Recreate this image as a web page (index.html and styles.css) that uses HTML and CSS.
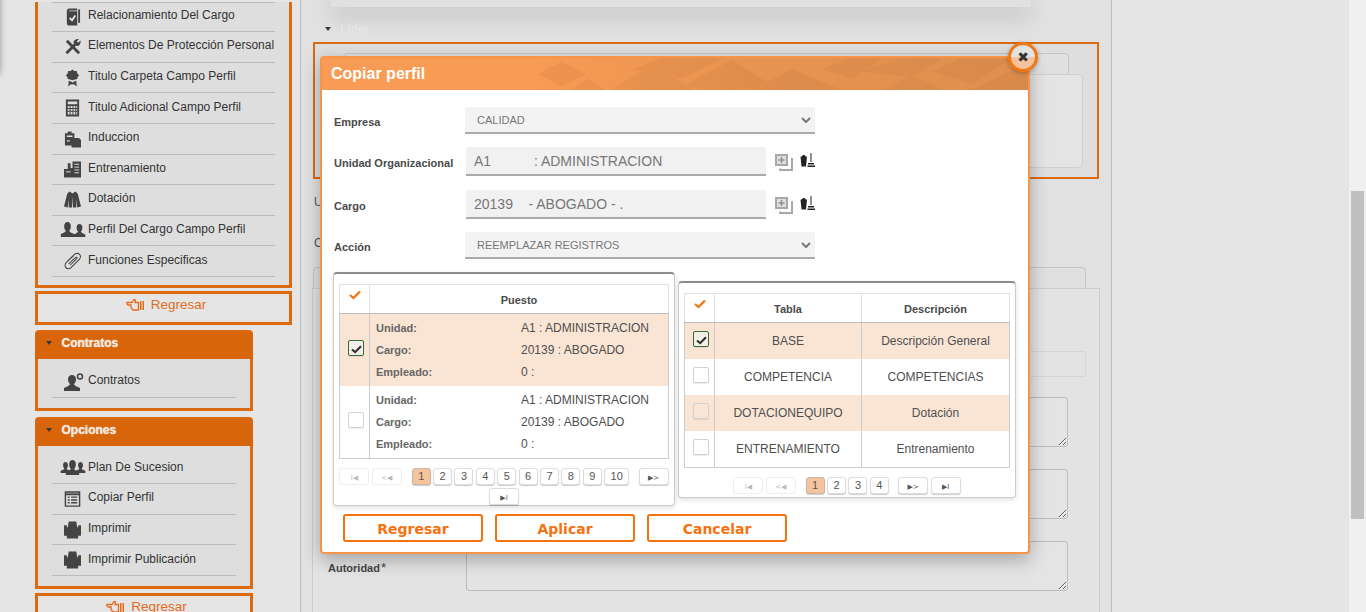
FILE: index.html
```html
<!DOCTYPE html>
<html lang="es">
<head>
    <meta charset="UTF-8">
    <meta name="viewport" content="width=device-width, initial-scale=1.0">
    <title>Copiar perfil</title>
    <link rel="stylesheet" href="styles.css">
</head>
<body>

<svg class="defs" aria-hidden="true">
    <symbol id="i-book" viewBox="0 0 18 18"><path d="M3 3 C3 1 4 0 6 0 H14 V2 H6 C5 2 5 3 6 3 H14 V18 H5 C3.500 18 3 17 3 16Z M15 1 H17 V15 H15Z"/><path d="M6 10 L8.500 12.500 L12 7.500" fill="none" stroke="#e4e4e4" stroke-width="2"/></symbol>
    <symbol id="i-tools" viewBox="0 0 18 18"><path d="M3 2.500 L16 15.500" fill="none" stroke="currentColor" stroke-width="3"/><path d="M2.500 15.500 L12 6" fill="none" stroke="currentColor" stroke-width="3"/><path d="M10 4.500 C10 1.500 13 0 16 .5 L13.500 3 L15 4.500 L17.500 2 C18 5 16.500 8 13.500 8Z"/></symbol>
    <symbol id="i-award" viewBox="0 0 18 18"><path d="M9 0 L11 1.500 L13.500 1.500 L14 4 L16 6 L14.500 8 L14 10 L11.500 10.500 L9 11.500 L6.500 10.500 L4 10 L3.500 8 L2 6 L4 4 L4.500 1.500 L7 1.500Z M5 12 L8 13 L9 14 L10 13 L13 12 L13.500 18 L11 16 L9 15.500 L7 16 L4.500 18Z"/></symbol>
    <symbol id="i-calc" viewBox="0 0 18 18"><path d="M2 0 H16 V18 H2Z"/><path d="M4 2 H14 V5 H4Z M4 7 H6 V9 H4Z M7 7 H9 V9 H7Z M10 7 H12 V9 H10Z M13 7 H14 V9 H13Z M4 10 H6 V12 H4Z M7 10 H9 V12 H7Z M10 10 H12 V12 H10Z M13 10 H14 V12 H13Z M4 13 H6 V16 H4Z M7 13 H9 V16 H7Z M10 13 H12 V16 H10Z M13 13 H14 V16 H13Z" fill="#dedede"/></symbol>
    <symbol id="i-clip" viewBox="0 0 18 18"><path d="M1 3 H4 V1 H8 V3 H11 V8 H16 L18 10 V18 H8 V16 H1Z"/><path d="M3 6 H9 M3 11 H6" stroke="#dedede" stroke-width="1.500"/></symbol>
    <symbol id="i-build" viewBox="0 0 18 18"><path d="M4 3 H7 V8 H9 V1 H18 V18 H0 V9 H4Z"/><path d="M11 4 H16 M11 7 H16 M11 10 H16 M11 13 H16 M2 12 H7" stroke="#dedede" stroke-width="1"/></symbol>
    <symbol id="i-coat" viewBox="0 0 18 18"><path d="M6 0 L9 2 L12 0 L14.500 2 L18 16 L14 17 L13 8 L13 17 L9.500 17 L9 5 L8.500 17 L5 17 L5 8 L4 17 L0 16 L3.500 2Z"/></symbol>
    <symbol id="i-user" viewBox="0 0 18 18"><path d="M5 5 C5 1.500 7 0 9 0 C11 0 13 1.500 13 5 C13 8 12 9.500 11 10.500 C11 12 14 13 17 14.500 V18 H1 V14.500 C4 13 7 12 7 10.500 C6 9.500 5 8 5 5Z"/></symbol>
    <symbol id="i-user-plus" viewBox="0 0 20 18"><path d="M4 6 C4 3.500 6 2 8 2 C10 2 12 3.500 12 6 C12 9 11 10 10 11 C10 12.500 13 13.500 16 15 V18 H0 V15 C3 13.500 6 12.500 6 11 C5 10 4 9 4 6Z"/><circle cx="16" cy="3.500" r="2.500" fill="none" stroke="currentColor" stroke-width="1.500"/></symbol>
    <symbol id="i-clipper" viewBox="0 0 18 18"><path d="M3 10 L10.500 2.500 C12.500 .5 15 .5 16.500 2 C18 3.500 17.500 6 16 7.500 L7.500 16 C6 17.500 3 17.500 2 16 C.5 14.500 1 12 2.500 10.500 L10 3.500 M5 12 L12 5.500 C13 4.500 14.500 5 13.500 6.500 L6.500 13.500" fill="none" stroke="currentColor" stroke-width="1.100"/></symbol>
    <symbol id="i-list" viewBox="0 0 18 18"><path d="M1.500 1.500 H16.500 V16.500 H1.500Z" fill="none" stroke="currentColor" stroke-width="1.500"/><path d="M2 4 H16" stroke="currentColor" stroke-width="2"/><path d="M4 7 H6 M7.500 7 H14 M4 10 H6 M7.500 10 H14 M4 13 H6 M7.500 13 H14" stroke="currentColor" stroke-width="1.500"/></symbol>
    <symbol id="i-print" viewBox="0 0 18 18"><path d="M5 0 H13 L14 6 H15 V4 H18 V15 H15 V18 H3 V15 H0 V4 H3 V6 H4Z"/></symbol>
    <symbol id="i-hand" viewBox="0 0 18 14"><path d="M1 4.500 H6 L8 1.500 L9.500 2 L9 4.500 H12.500 V12 H7 L5 9.500 V7 H2.500 C1 7 .5 5 1 4.500Z" fill="none" stroke="currentColor" stroke-width="1.300"/><path d="M14 3 H15.500 V12 H14Z M16.500 3 H18 V12 H16.500Z" fill="currentColor"/></symbol>
    <symbol id="i-check" viewBox="0 0 12 10"><path d="M1 5 L4.500 8 L11 1.500" fill="none" stroke="currentColor" stroke-width="2.300"/></symbol>
    <symbol id="i-copy" viewBox="0 0 18 17"><path d="M1 1 H12 V11 H1Z" fill="#e0e0e0" stroke="#a8a8a8" stroke-width="2"/><path d="M6.500 3 V9 M3.500 6 H9.500" stroke="#8e8e8e" stroke-width="1.500"/><path d="M16 5 H17 V16 H5 V14.500" fill="none" stroke="#a8a8a8" stroke-width="2"/></symbol>
    <symbol id="i-broom" viewBox="0 0 15 14"><path d="M2 3.500 C2 1.500 5.500 1.500 5.500 3.500 H7 L6 13.500 H1.500 L.5 3.500Z" fill="#222"/><path d="M11 0 V9" stroke="#222" stroke-width="1"/><path d="M8 10 H14 V11.500 H8Z M7.500 12.500 H15 V14 H7.500Z" fill="#222"/></symbol>
    <symbol id="i-chev" viewBox="0 0 10 6"><path d="M1 1 L5 5 L9 1" fill="none" stroke="#777" stroke-width="2"/></symbol>
</svg>

<div class="page">
    <div class="sidebar">
        <div class="panel panel-wide panel-open">
            <a class="row"><svg class="ico"><use href="#i-book"/></svg>Relacionamiento Del Cargo</a>
            <a class="row"><svg class="ico"><use href="#i-tools"/></svg>Elementos De Protección Personal</a>
            <a class="row"><svg class="ico"><use href="#i-award"/></svg>Titulo Carpeta Campo Perfil</a>
            <a class="row"><svg class="ico"><use href="#i-calc"/></svg>Titulo Adicional Campo Perfil</a>
            <a class="row"><svg class="ico"><use href="#i-clip"/></svg>Induccion</a>
            <a class="row"><svg class="ico"><use href="#i-build"/></svg>Entrenamiento</a>
            <a class="row"><svg class="ico"><use href="#i-coat"/></svg>Dotación</a>
            <a class="row"><svg class="ico"><use href="#i-user" x="9" y="2" width="13" height="13"/><use href="#i-user" x="-4" y="0" width="15" height="15"/></svg>Perfil Del Cargo Campo Perfil</a>
            <a class="row"><svg class="ico"><use href="#i-clipper"/></svg>Funciones Especificas</a>
        </div>
        <a class="back back-wide"><svg class="ico-hand"><use href="#i-hand"/></svg>Regresar</a>

        <div class="panel">
            <div class="panel-head"><span class="caret"></span>Contratos</div>
            <div class="panel-body">
                <a class="row"><svg class="ico"><use href="#i-user-plus" width="20" height="18"/></svg>Contratos</a>
            </div>
        </div>

        <div class="panel panel-last">
            <div class="panel-head"><span class="caret"></span>Opciones</div>
            <div class="panel-body">
                <a class="row"><svg class="ico"><use href="#i-user" x="-4" y="3" width="11" height="11"/><use href="#i-user" x="11" y="3" width="11" height="11"/><use href="#i-user" x="1" y="1" width="15" height="15"/></svg>Plan De Sucesion</a>
                <a class="row"><svg class="ico"><use href="#i-list"/></svg>Copiar Perfil</a>
                <a class="row"><svg class="ico"><use href="#i-print"/></svg>Imprimir</a>
                <a class="row"><svg class="ico"><use href="#i-print"/></svg>Imprimir Publicación</a>
            </div>
        </div>
        <a class="back"><svg class="ico-hand"><use href="#i-hand"/></svg>Regresar</a>
    </div>

    <div class="main">
        <div class="top-card"></div>
        <div class="leader"><span class="caret"></span>Líder</div>
        <div class="leader-box">
            <div class="ghost ghost-a"></div>
            <div class="ghost ghost-b"></div>
        </div>
        <div class="ghost-label">U</div>
        <div class="ghost-label ghost-label-2">C</div>
        <div class="tab-box"></div>
        <div class="detail">
            <div class="ghost-input"></div>
            <textarea class="area"></textarea>
            <textarea class="area"></textarea>
            <div class="area-row">
                <label class="area-label">Autoridad<span class="req">*</span></label>
                <textarea class="area"></textarea>
            </div>
        </div>
    </div>

    <div class="scrollbar"><div class="thumb"></div></div>
</div>

<div class="shade-left"></div>

<div class="modal">
    <div class="modal-head">
        <svg class="modal-art" viewBox="0 0 706 34" preserveAspectRatio="none">
            <g fill="#b8713a" opacity=".15">
                <polygon points="216,17 240,4 264,17 240,30"/>
                <polygon points="250,34 266,22 284,34"/>
                <polygon points="290,34 330,6 372,34"/>
                <polygon points="310,12 340,0 400,0 360,22"/>
                <polygon points="360,30 410,2 452,30 410,34 390,34"/>
                <polygon points="430,34 470,12 520,34"/>
                <polygon points="500,12 530,0 560,0 530,22"/>
                <polygon points="540,14 580,0 620,0 590,20"/>
                <polygon points="560,34 590,18 620,34"/>
                <polygon points="610,14 640,0 690,0 650,28"/>
                <polygon points="650,34 706,4 706,34"/>
            </g>
        </svg>
        <h2 class="modal-title">Copiar perfil</h2>
    </div>
    <span class="modal-close">✖</span>

    <div class="modal-body">
        <div class="form-row form-row-select">
            <label>Empresa</label>
            <span class="sel">
                <select class="fld-select"><option>CALIDAD</option></select>
                <svg class="chev"><use href="#i-chev"/></svg>
            </span>
        </div>
        <div class="form-row form-row-input">
            <label>Unidad Organizacional</label>
            <input class="fld-input" type="text" value="A1           : ADMINISTRACION">
            <svg class="btn-copy"><use href="#i-copy"/></svg>
            <svg class="btn-broom"><use href="#i-broom"/></svg>
        </div>
        <div class="form-row form-row-input">
            <label>Cargo</label>
            <input class="fld-input" type="text" value="20139    - ABOGADO - .">
            <svg class="btn-copy"><use href="#i-copy"/></svg>
            <svg class="btn-broom"><use href="#i-broom"/></svg>
        </div>
        <div class="form-row form-row-select">
            <label>Acción</label>
            <span class="sel">
                <select class="fld-select"><option>REEMPLAZAR REGISTROS</option></select>
                <svg class="chev"><use href="#i-chev"/></svg>
            </span>
        </div>

        <div class="grids">
            <div class="grid-box grid-left">
                <table class="grid">
                    <thead>
                        <tr>
                            <th class="col-check"><svg class="head-check"><use href="#i-check"/></svg></th>
                            <th>Puesto</th>
                        </tr>
                    </thead>
                    <tbody>
                        <tr class="odd">
                            <td class="col-check"><span class="cb cb-on"><svg><use href="#i-check"/></svg></span></td>
                            <td>
                                <div class="job">
                                    <b>Unidad:</b><span>A1 : ADMINISTRACION</span>
                                    <b>Cargo:</b><span>20139 : ABOGADO</span>
                                    <b>Empleado:</b><span>0 :</span>
                                </div>
                            </td>
                        </tr>
                        <tr>
                            <td class="col-check"><span class="cb"></span></td>
                            <td>
                                <div class="job">
                                    <b>Unidad:</b><span>A1 : ADMINISTRACION</span>
                                    <b>Cargo:</b><span>20139 : ABOGADO</span>
                                    <b>Empleado:</b><span>0 :</span>
                                </div>
                            </td>
                        </tr>
                    </tbody>
                </table>
                <div class="pager">
                    <a class="pg pg-nav pg-off">I◀</a>
                    <a class="pg pg-nav pg-off pg-before">&lt;◀</a>
                    <a class="pg pg-on">1</a>
                    <a class="pg">2</a>
                    <a class="pg">3</a>
                    <a class="pg">4</a>
                    <a class="pg">5</a>
                    <a class="pg">6</a>
                    <a class="pg">7</a>
                    <a class="pg">8</a>
                    <a class="pg">9</a>
                    <a class="pg pg-ten pg-after">10</a>
                    <a class="pg pg-nav">▶&gt;</a>
                    <a class="pg pg-nav">▶I</a>
                </div>
            </div>

            <div class="grid-box grid-right">
                <table class="grid grid-tables">
                    <thead>
                        <tr>
                            <th class="col-check"><svg class="head-check"><use href="#i-check"/></svg></th>
                            <th class="col-table">Tabla</th>
                            <th>Descripción</th>
                        </tr>
                    </thead>
                    <tbody>
                        <tr class="odd">
                            <td class="col-check"><span class="cb cb-on"><svg><use href="#i-check"/></svg></span></td>
                            <td>BASE</td>
                            <td>Descripción General</td>
                        </tr>
                        <tr>
                            <td class="col-check"><span class="cb"></span></td>
                            <td>COMPETENCIA</td>
                            <td>COMPETENCIAS</td>
                        </tr>
                        <tr class="odd">
                            <td class="col-check"><span class="cb"></span></td>
                            <td>DOTACIONEQUIPO</td>
                            <td>Dotación</td>
                        </tr>
                        <tr>
                            <td class="col-check"><span class="cb"></span></td>
                            <td>ENTRENAMIENTO</td>
                            <td>Entrenamiento</td>
                        </tr>
                    </tbody>
                </table>
                <div class="pager">
                    <a class="pg pg-nav pg-off">I◀</a>
                    <a class="pg pg-nav pg-off pg-before">&lt;◀</a>
                    <a class="pg pg-on">1</a>
                    <a class="pg">2</a>
                    <a class="pg">3</a>
                    <a class="pg pg-after">4</a>
                    <a class="pg pg-nav">▶&gt;</a>
                    <a class="pg pg-nav">▶I</a>
                </div>
            </div>
        </div>

        <div class="actions">
            <button type="button">Regresar</button>
            <button type="button">Aplicar</button>
            <button type="button">Cancelar</button>
        </div>
    </div>
</div>

</body>
</html>
```

FILE: styles.css
```css
html, body {
    margin: 0;
    height: 612px;
    overflow: hidden;
}
body {
    font-family: "Liberation Sans", Arial, sans-serif;
    font-size: 12px;
    color: #333;
    background-color: #e5e5e5;
}
.defs {
    position: absolute;
    width: 0;
    height: 0;
}
.page {
    display: flex;
    height: 612px;
}

/* sidebar */
.sidebar {
    width: 301px;
    flex: none;
    box-sizing: border-box;
    padding: 1.600px 0 0 35px;
    border-right: 1px solid #bcbcbc;
}
.panel {
    width: 218px;
    box-sizing: border-box;
    border: 3px solid #dc6a10;
    border-radius: 4px 4px 0 0;
    background: #dedede;
    margin-bottom: 6px;
}
.panel-wide {
    width: 257px;
}
.panel-open {
    border-top: none;
    border-radius: 0;
    padding: 0 14px 8px;
    margin-bottom: 3px;
}
.panel-open .row:first-child {
    border-top: 1px solid #bbb;
}
.panel-last {
    margin-bottom: 4px;
}
.panel-head {
    display: flex;
    align-items: center;
    box-sizing: border-box;
    height: 27px;
    margin: -1px -3px 0;
    padding: 0 0 4px 11px;
    border-radius: 4px 4px 0 0;
    background: #d9650b;
    color: #f2e6dc;
    font-weight: bold;
    text-shadow: 0 0 1px #fff;
}
.panel-head .caret {
    margin-right: 9.500px;
}
.panel-body {
    padding: 8px 14px 10px;
}
.caret {
    width: 0;
    height: 0;
    border-left: 3.500px solid transparent;
    border-right: 3.500px solid transparent;
    border-top: 4px solid #3a3a3a;
}
.row {
    display: flex;
    align-items: center;
    box-sizing: border-box;
    height: 30.600px;
    padding-bottom: 3px;
    border-bottom: 1px solid #bbb;
    color: #333;
    white-space: nowrap;
}
.ico {
    width: 17px;
    height: 18px;
    margin: 3px 7.500px 0 11.500px;
    flex: none;
    fill: #444;
    color: #444;
    overflow: visible;
}
.back {
    display: flex;
    align-items: center;
    justify-content: center;
    width: 218px;
    height: 34px;
    box-sizing: border-box;
    padding: 0 0 6px 5px;
    border: 3px solid #dc6a10;
    color: #e26c22;
    font-size: 13.500px;
}
.back-wide {
    width: 257px;
    margin-bottom: 5px;
}
.ico-hand {
    width: 18px;
    height: 14px;
    margin-right: 7px;
    color: #e66a1a;
}

/* page behind the modal */
.main {
    width: 811px;
    flex: none;
    box-sizing: border-box;
    padding: 0 11px 0 12px;
    border-right: 1px solid #bcbcbc;
    background: #e1e1e1;
}
.top-card {
    width: 700px;
    height: 7px;
    margin-left: 18px;
    background: #e0e0e0;
    box-shadow: 0 6px 22px rgba(0, 0, 0, .28);
}
.leader {
    display: flex;
    align-items: center;
    height: 35px;
    padding: 8px 0 0 12px;
    box-sizing: border-box;
    color: #e6e6e6;
    font-size: 13px;
}
.leader .caret {
    margin-right: 9px;
}
.leader-box {
    box-sizing: border-box;
    width: 786px;
    height: 137px;
    padding: 9px 15px 0 28px;
    border: 2px solid #dc6a10;
    background: #dedede;
}
.ghost {
    box-sizing: border-box;
    border: 1px solid #c6c6c6;
    border-radius: 4px;
}
.ghost-a {
    width: 726px;
    height: 42px;
    background: #e0e0e0;
}
.ghost-b {
    width: 740px;
    height: 94px;
    margin-top: -21px;
    background: #e4e4e4;
    border-color: #cfcfcf;
}
.ghost-label {
    margin-top: 16px;
    padding-left: 1px;
    height: 15px;
    line-height: 15px;
    color: #555;
    font-size: 12px;
}
.ghost-label-2 {
    margin-top: 26px;
}
.tab-box {
    box-sizing: border-box;
    width: 773px;
    height: 43px;
    margin-top: 16px;
    border: 1px solid #c6c6c6;
    border-radius: 4px;
    background: #e0e0e0;
}
.detail {
    box-sizing: border-box;
    width: 788px;
    height: 340px;
    margin: -22px 0 0 -1px;
    padding: 62px 0 0 153px;
    border: 1px solid #cdcdcd;
    border-bottom: none;
    background: #e3e3e3;
}
.ghost-input {
    box-sizing: border-box;
    width: 620px;
    height: 26px;
    margin-bottom: 20px;
    border: 1px solid #d6d6d6;
    border-radius: 3px;
}
.area {
    display: block;
    box-sizing: border-box;
    width: 602px;
    height: 50px;
    margin: 0 0 22px;
    border: 1px solid #bdbdbd;
    border-radius: 3px;
    background: #e4e4e4;
}
.area-row {
    position: relative;
}
.area-label {
    position: absolute;
    left: -138px;
    top: 19px;
    color: #444;
    font-weight: bold;
    font-size: 11px;
}
.req {
    margin-left: 1px;
    font-weight: normal;
    font-size: 13px;
}

/* scrollbar */
.scrollbar {
    margin-left: auto;
    width: 17px;
    height: 612px;
    background: #f0f0f0;
    box-sizing: border-box;
    padding: 191px 2px 0 2px;
}
.thumb {
    height: 328px;
    background: #c0c0c0;
}
.shade-left {
    position: absolute;
    left: -8px;
    top: -10px;
    width: 8px;
    height: 84px;
    box-shadow: 0 0 6px rgba(0, 0, 0, .35);
}

/* modal */
.modal {
    position: absolute;
    left: 320px;
    top: 56px;
    width: 710px;
    height: 498px;
    box-sizing: border-box;
    border: 2px solid #f6954a;
    border-radius: 4px;
    background: #fff;
    box-shadow: 0 6px 18px rgba(0, 0, 0, .28);
}
.modal-head {
    position: relative;
    height: 32px;
    background: linear-gradient(90deg, #f89b54 0, #f89b54 30%, #e89350 60%, #df8f4e 100%);
    overflow: hidden;
}
.modal-art {
    position: absolute;
    left: 0;
    top: 0;
    width: 100%;
    height: 100%;
}
.modal-title {
    position: relative;
    margin: 0;
    padding-left: 9px;
    line-height: 31px;
    color: #fff;
    font-size: 16px;
}
.modal-close {
    position: absolute;
    right: -10px;
    top: -16px;
    width: 24px;
    height: 24px;
    border: 3px solid #f2760f;
    border-radius: 50%;
    background: linear-gradient(180deg, #e2e2e2 0, #e2e2e2 50%, #f3c19b 50%);
    box-shadow: 0 1px 4px rgba(0, 0, 0, .3);
    color: #333;
    font: 14px/24px "DejaVu Sans", sans-serif;
    text-align: center;
}
.modal-body {
    padding: 0 11px;
}
.form-row {
    display: flex;
    align-items: center;
}
.form-row label {
    width: 131px;
    margin-left: 1px;
    flex: none;
    padding-top: 3px;
    color: #4a4a4a;
    font-size: 11px;
    font-weight: bold;
}
.form-row-select {
    height: 27px;
}
.form-row-input {
    height: 29px;
}
.form-row:nth-child(1) {
    margin-top: 17px;
}
.form-row:nth-child(2) {
    margin-top: 13px;
}
.form-row:nth-child(3) {
    margin-top: 14px;
}
.form-row:nth-child(4) {
    margin-top: 13px;
}
.sel {
    position: relative;
    display: block;
    height: 27px;
}
.fld-select {
    appearance: none;
    display: block;
    width: 350px;
    height: 27px;
    padding: 0 12px;
    border: none;
    border-bottom: 2px solid #aaa;
    border-radius: 3px 3px 0 0;
    background: #f3f3f3;
    color: #777;
    font: 11px "Liberation Sans", Arial, sans-serif;
}
.chev {
    position: absolute;
    right: 4px;
    top: 10px;
    width: 10px;
    height: 6px;
}
.fld-input {
    width: 300px;
    height: 29px;
    box-sizing: border-box;
    margin-left: 1px;
    padding: 0 8px;
    border: none;
    border-bottom: 2px solid #aaa;
    border-radius: 3px 3px 0 0;
    background: #f1f1f1;
    color: #777;
    font: 14px "Liberation Sans", Arial, sans-serif;
}
.btn-copy {
    width: 18px;
    height: 17px;
    margin: 2px 0 0 9px;
}
.btn-broom {
    width: 15px;
    height: 14px;
    margin: -3px 0 0 7px;
}

/* grids */
.grids {
    display: flex;
    gap: 3px;
    align-items: flex-start;
    margin-top: 13px;
}
.grid-box {
    box-sizing: border-box;
    padding: 10px 5px 0;
    border: 1px solid #ccc;
    border-top: 2px solid #8c8c8c;
    border-radius: 4px;
    background: #fff;
    box-shadow: 0 2px 5px rgba(0, 0, 0, .12);
}
.grid-left {
    width: 342px;
    height: 234px;
}
.grid-right {
    width: 338px;
    height: 217px;
    margin-top: 9px;
}
.grid {
    width: 100%;
    border-collapse: collapse;
    table-layout: fixed;
    color: #4f4f4f;
}
.grid th, .grid td {
    border-left: 1px solid #ccc;
    border-right: 1px solid #ccc;
    padding: 0;
    text-align: center;
}
.grid th {
    height: 29px;
    padding-top: 2px;
    box-sizing: border-box;
    border-top: 1px solid #e2e2e2;
    border-bottom: 1px solid #bbb;
    border-left-color: #e2e2e2;
    border-right-color: #e2e2e2;
    color: #4a4a4a;
    font-size: 11px;
}
.grid tbody tr:last-child td {
    border-bottom: 1px solid #ccc;
}
.grid .col-check {
    width: 30px;
}
.col-table {
    width: 147px;
}
.grid-tables td {
    height: 36px;
    box-sizing: border-box;
}
.grid-tables tbody tr:last-child td {
    height: 37px;
}
.head-check {
    display: block;
    width: 12px;
    height: 10px;
    margin: -10px 0 0 9px;
    color: #f2760f;
}
.odd td {
    background: #fae5d5;
}
.cb {
    display: block;
    box-sizing: border-box;
    width: 16px;
    height: 16px;
    margin: -4px 0 0 8px;
    border: 1px solid #d2d2d2;
    border-radius: 2px;
    background: #fff;
    box-shadow: 0 1px 1px rgba(0, 0, 0, .08);
}
.odd .cb {
    background: #fae5d5;
}
.odd .cb-on {
    border-color: #3c6a3c;
    background: #f2efe9;
    color: #2c2c2c;
}
.cb svg {
    display: block;
    width: 11px;
    height: 9px;
    margin: 4px 0 0 2px;
}
.job {
    display: grid;
    grid-template-columns: 145px 1fr;
    grid-auto-rows: 22px;
    align-items: center;
    height: 72px;
    padding: 3px 0 3px 6px;
    box-sizing: border-box;
    text-align: left;
}
.job b {
    color: #666;
    font-size: 11px;
}

/* pager */
.pager {
    display: flex;
    flex-wrap: wrap;
    justify-content: center;
    gap: 3px 2.400px;
    margin-top: 9px;
}
.pg {
    display: block;
    width: 19px;
    height: 17px;
    box-sizing: border-box;
    border: 1px solid #ddd;
    border-radius: 3px;
    background: #fff;
    box-shadow: 0 1px 1px rgba(0, 0, 0, .2);
    color: #555;
    font-size: 11px;
    line-height: 14px;
    text-align: center;
}
.pg-on {
    background: #f5c49d;
    border-color: #c9b6a6;
}
.pg-ten {
    width: 25px;
}
.pg-nav {
    width: 30px;
    font: 7px/19px "DejaVu Sans", sans-serif;
}
.pg-off {
    box-shadow: none;
    border-color: #eee;
    color: #bbb;
}
.pg-before {
    margin-right: 7.500px;
}
.pg-after {
    margin-right: 7px;
}

.actions {
    position: absolute;
    left: 21px;
    bottom: 10px;
    display: flex;
    gap: 12px;
}
.actions button {
    width: 140px;
    height: 28px;
    padding: 1px 0 0;
    border: 2px solid #f5720f;
    border-radius: 3px;
    background: #fff;
    color: #f5720f;
    font: bold 14px "DejaVu Sans", sans-serif;
}
```
